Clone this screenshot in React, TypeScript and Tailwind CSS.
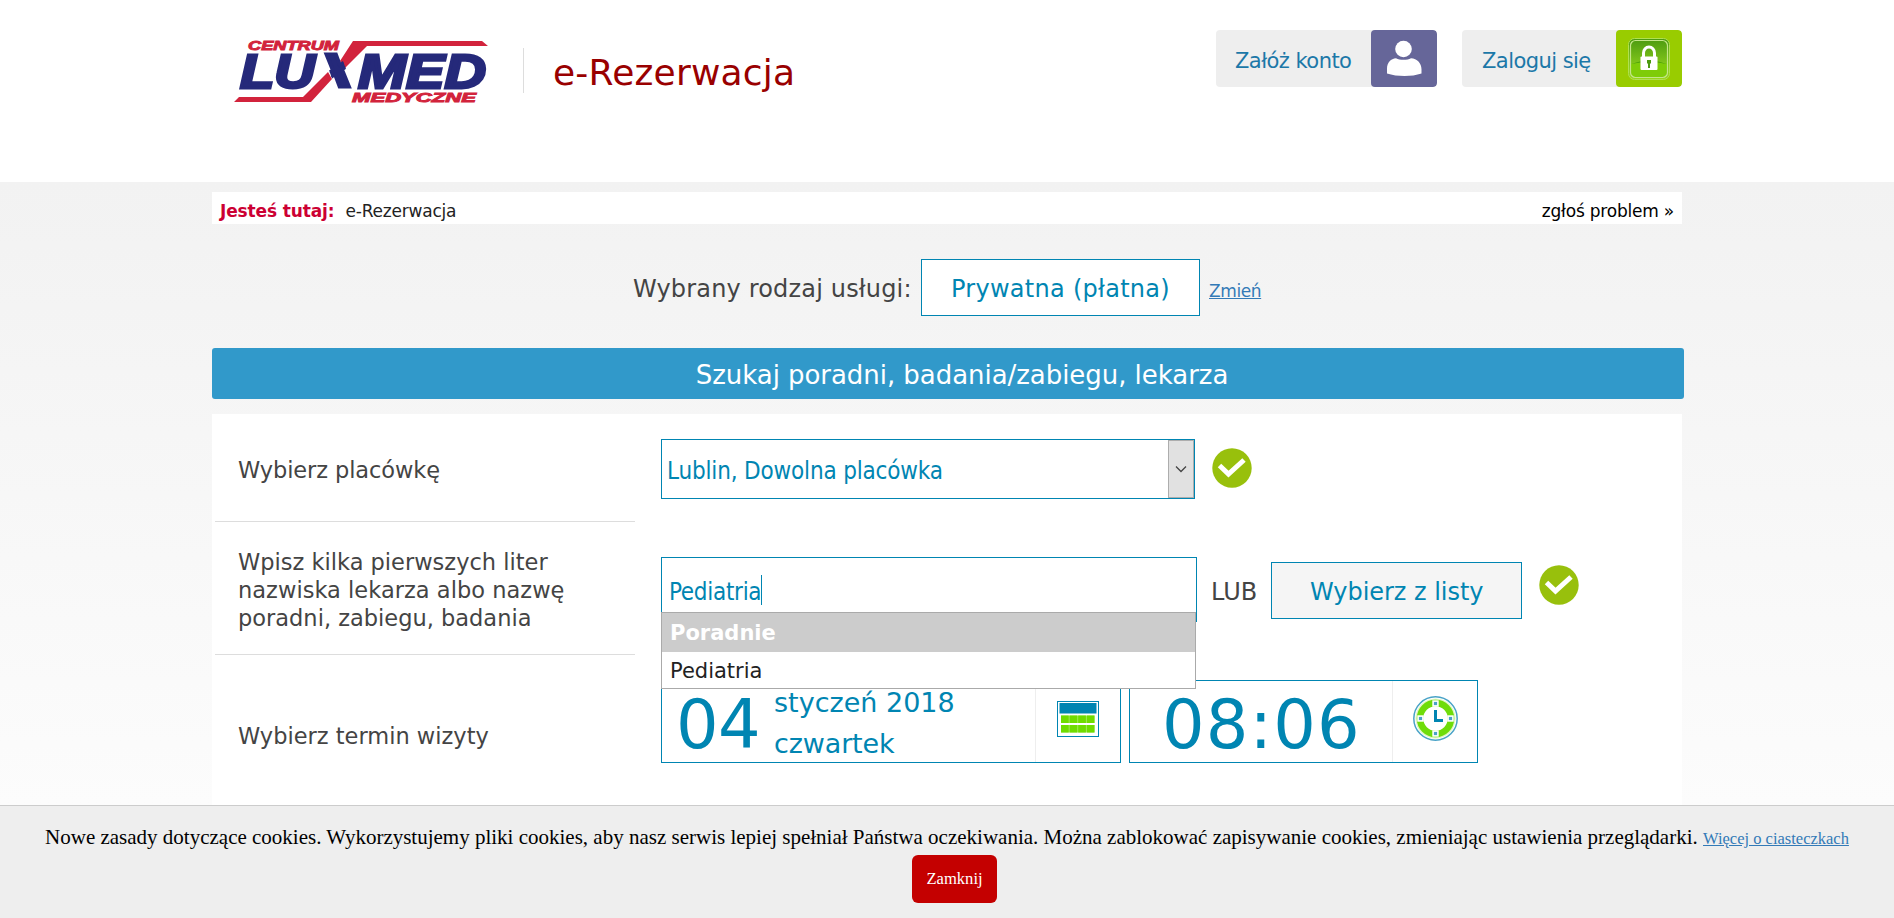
import React from "react";

function Logo() {
  return (
    <svg width="270" height="76" viewBox="0 0 270 76" className="block" aria-label="Centrum Medyczne Luxmed">
      <defs>
        <clipPath id="stroke-x">
          <polygon points="97,19 114,19 130,60 112,60" />
        </clipPath>
      </defs>
      <g fill="#d2233c">
        <polygon points="128,9 257,9 263,14 142,14 120,36 115,29" />
        <polygon points="14,65 78,65 103,40 107,47 86,70 9,70" />
      </g>
      <g fontFamily="Liberation Sans, Arial, sans-serif" fontWeight="700" fontStyle="italic">
        <g fill="#d2233c" stroke="#d2233c" strokeWidth="0.9" fontSize="13">
          <text x="23" y="17.5" textLength="91" lengthAdjust="spacingAndGlyphs">CENTRUM</text>
          <text x="127" y="69.5" textLength="124" lengthAdjust="spacingAndGlyphs">MEDYCZNE</text>
        </g>
        <g fill="#25297a" stroke="#25297a" strokeWidth="2.8" fontSize="48">
          <text x="15" y="55.5" textLength="75" lengthAdjust="spacingAndGlyphs">LU</text>
          <g clipPath="url(#stroke-x)">
            <text x="86" y="55.5" textLength="42" lengthAdjust="spacingAndGlyphs" transform="translate(14.2 0) skewX(-14)">X</text>
          </g>
          <text x="133" y="55.5" textLength="128" lengthAdjust="spacingAndGlyphs">MED</text>
        </g>
      </g>
    </svg>
  );
}

function UserIcon() {
  return (
    <svg width="66" height="57" viewBox="0 0 66 57" fill="#fff">
      <circle cx="32.5" cy="19" r="8.3" />
      <path d="M16 43.5v-5c0-6 4-10 9-10.3 2 1 4.500 1.500 7.500 1.500s5.500-.5 7.500-1.500c6 .3 10.500 5 10.500 11v4.300c-5 1.700-11 2.500-17 2.500s-12.500-.8-17.500-2.500z" />
    </svg>
  );
}

function LockIcon() {
  return (
    <svg width="66" height="57" viewBox="0 0 66 57">
      <defs>
        <linearGradient id="gloss" x1="0" y1="0" x2="0" y2="1">
          <stop offset="0" stopColor="#4a9a10" />
          <stop offset="0.6" stopColor="#80c41a" />
          <stop offset="1" stopColor="#9ad51c" />
        </linearGradient>
      </defs>
      <rect x="12.500" y="8.500" width="41" height="41" rx="6" fill="url(#gloss)" stroke="#b0e050" strokeWidth="1" />
      <path d="M15 34q18-7 36 0v10q0 3-3 3H18q-3 0-3-3z" fill="#7fcc08" />
      <path d="M15 34q18-7 36 0-18-4-36 0z" fill="#469a0c" />
      <rect x="14.500" y="10.500" width="37" height="37" rx="5" fill="none" stroke="#c4e68a" strokeWidth="1.200" />
      <path d="M27.500 28v-5a5.500 6 0 0 1 11 0v5" fill="none" stroke="#fff" strokeWidth="3" />
      <rect x="24.500" y="26.500" width="17" height="13.500" rx="1" fill="#fff" />
      <path d="M31 30h4v3l-1 1v4h-2v-4l-1-1z" fill="#4c9b10" />
    </svg>
  );
}

function CheckIcon() {
  return (
    <svg width="40" height="40" viewBox="0 0 40 40" className="block shrink-0">
      <circle cx="20" cy="20" r="19.700" fill="#98c00c" />
      <path d="M7.500 17.500l9 8.500L32 12" fill="none" stroke="#fff" strokeWidth="5" />
    </svg>
  );
}

function CalendarIcon() {
  const xs = [4, 12.6, 21.2, 29.8];
  return (
    <svg width="42" height="36" viewBox="0 0 42 36" className="block">
      <rect x="0.500" y="0.500" width="41" height="35" fill="#fff" stroke="#0085b2" />
      <rect x="2.500" y="2" width="37" height="10.500" fill="#0085b2" />
      <rect x="4" y="14.500" width="33.500" height="7.500" fill="#a5ea60" />
      <rect x="4" y="24" width="33.500" height="7.500" fill="#a5ea60" />
      {xs.map((x) => (
        <g key={x} fill="#6fdc00">
          <rect x={x} y="14.500" width="7.700" height="7.500" />
          <rect x={x} y="24" width="7.700" height="7.500" />
        </g>
      ))}
    </svg>
  );
}

function ClockIcon() {
  return (
    <svg width="45" height="45" viewBox="0 0 45 45" className="block">
      <circle cx="22.500" cy="22.500" r="21.700" fill="#fff" stroke="#4aa3c7" strokeWidth="1.500" />
      <circle cx="22.500" cy="22.500" r="20" fill="#e0f7c4" />
      <circle cx="22.500" cy="22.500" r="15.5" fill="#fff" stroke="#6fdc0a" strokeWidth="6.5" />
      {[[22.5, 7.5], [22.5, 37.5], [7.5, 22.5], [37.5, 22.5]].map(([x, y]) => (
        <g key={`${x}-${y}`}>
          <rect x={x - 3.2} y={y - 3.2} width="6.400" height="6.400" fill="#fff" />
          <rect x={x - 1.6} y={y - 1.6} width="3.200" height="3.200" fill="#4aa3c7" />
        </g>
      ))}
      <path d="M22.500 14v10.500H30" fill="none" stroke="#0085b2" strokeWidth="3" />
    </svg>
  );
}

export default function App() {
  return (
    <div className="flex h-[918px] w-[1894px] flex-col overflow-hidden bg-white font-['DejaVu_Sans',Verdana,sans-serif] text-[#444]">
      <header className="flex h-[182px] shrink-0 items-start bg-white pl-[225px]">
        <div className="mt-8">
          <Logo />
        </div>
        <div className="mt-12 ml-7 h-[45px] w-px bg-[#ddd]" />
        <h1 className="mt-[53px] ml-[29px] text-[36px] leading-10 tracking-[0.2px] whitespace-nowrap text-[#990000]">e-Rezerwacja</h1>
        <div className="mt-[30px] ml-auto flex gap-[25px] pr-[212px] text-[21px] tracking-[-0.55px] text-[#1c78a8]">
          <button className="flex h-[57px] w-[221px] overflow-hidden rounded bg-[#eee]">
            <span className="flex h-full w-[155px] items-center pt-[6px] pl-[19px] whitespace-nowrap">Załóż konto</span>
            <span className="h-full w-[66px] rounded bg-[#666699]"><UserIcon /></span>
          </button>
          <button className="flex h-[57px] w-[220px] overflow-hidden rounded bg-[#eee]">
            <span className="flex h-full w-[154px] items-center pt-[6px] pl-[20px] whitespace-nowrap">Zaloguj się</span>
            <span className="h-full w-[66px] rounded bg-[#99cc00]"><LockIcon /></span>
          </button>
        </div>
      </header>

      <main className="h-[623px] shrink-0 overflow-hidden bg-gradient-to-b from-[#f2f2f2] to-[#fcfcfc] pt-[10px] pl-[212px]">
        <nav className="flex h-8 w-[1470px] items-center bg-white pt-[8px] pr-2 pl-2 text-[17px]">
          <b className="tracking-[-0.13px] text-[#cc0033]">Jesteś tutaj:</b>
          <span className="ml-[11px] tracking-[-0.2px] text-[#222]">e-Rezerwacja</span>
          <a className="ml-auto tracking-[-0.21px] text-black">zgłoś problem »</a>
        </nav>

        <section className="mt-[35px] flex h-[57px] w-[1470px] items-center pl-[421px] text-[24px]">
          <span className="w-[288px] pt-[2px] tracking-[0.17px] whitespace-nowrap">Wybrany rodzaj usługi:</span>
          <span className="flex h-[57px] w-[279px] items-center border border-[#0085b2] bg-white pt-[2px] pl-[29px] tracking-[0.28px] whitespace-nowrap text-[#0085b2]">Prywatna (płatna)</span>
          <a className="ml-[9px] pt-[8px] text-[17px] tracking-[-0.4px] text-[#337ab7] underline">Zmień</a>
        </section>

        <h2 className="mt-8 flex h-[51px] w-[1472px] items-center justify-center rounded-[3px] bg-[#3199ca] pt-[3px] text-[26px] text-white">
          <span className="ml-[28px] tracking-[-0.05px]">Szukaj poradni, badania/zabiegu, lekarza</span>
        </h2>

        <form className="mt-[15px] h-[391px] w-[1470px] bg-white pl-[3px] text-[22.5px]">
          <div className="flex h-[108px]">
            <label className="flex w-[420px] items-center border-b border-[#ddd] pt-[7px] pl-[23px] tracking-[-0.1px]">Wybierz placówkę</label>
            <div className="mt-[25px] ml-[26px] flex h-[60px] w-[534px] border border-[#0085b2] bg-white">
              <span className="flex flex-1 items-center pt-[3px] pl-[5px] font-['DejaVu_Sans_Condensed','DejaVu_Sans',sans-serif] text-[24px] font-stretch-condensed tracking-[-0.17px] text-[#0085b2]">Lublin, Dowolna placówka</span>
              <span className="flex w-[26px] items-center justify-center border border-[#adadad] bg-[#e1e1e1]">
                <svg width="12" height="8" viewBox="0 0 12 8"><path d="M1 1.500l5 5 5-5" fill="none" stroke="#444" strokeWidth="1.300" /></svg>
              </span>
            </div>
            <div className="mt-[34px] ml-[17px]"><CheckIcon /></div>
          </div>

          <div className="flex h-[133px]">
            <label className="flex w-[420px] flex-col justify-center border-b border-[#ddd] pt-[4px] pl-[23px] leading-7 whitespace-nowrap">
              <span>Wpisz kilka pierwszych liter</span>
              <span className="tracking-[0.03px]">nazwiska lekarza albo nazwę</span>
              <span>poradni, zabiegu, badania</span>
            </label>
            <div className="relative mt-[35px] ml-[26px] flex h-[65px] w-[536px] items-center border border-[#0085b2] bg-white">
              <span className="pt-[4px] pl-[7px] font-['DejaVu_Sans_Condensed','DejaVu_Sans',sans-serif] text-[24px] font-stretch-condensed tracking-[-0.3px] text-[#0085b2]">Pediatria</span>
              <span className="h-[30px] w-px bg-[#0085b2]" />
              <ul className="absolute top-[54px] -left-px z-10 w-[535px] border border-[#aaa] bg-white text-[21px]">
                <li className="flex h-[39px] items-center bg-[#ccc] pt-[3px] pl-[8px] font-bold text-white">Poradnie</li>
                <li className="flex h-[36px] items-center pt-[4px] pl-[8px] text-[#222]">Pediatria</li>
              </ul>
            </div>
            <span className="mt-[55px] ml-[14px] w-[60px] text-[24px] leading-[30px]">LUB</span>
            <button type="button" className="mt-[40px] flex h-[57px] w-[251px] items-center border border-[#0085b2] bg-[#f5f5f5] pt-[3px] pl-[38px] text-[24px] tracking-[-0.03px] whitespace-nowrap text-[#0085b2]">Wybierz z listy</button>
            <div className="mt-[43px] ml-[17px]"><CheckIcon /></div>
          </div>

          <div className="flex h-[148px]">
            <label className="flex w-[420px] items-center pt-[16px] pl-[23px]">Wybierz termin wizyty</label>
            <div className="mt-[25px] ml-[26px] flex h-[83px] w-[460px] border border-[#0085b2] text-[#0085b2]">
              <span className="flex w-[112px] items-center pt-[7px] pl-[14px] text-[67px] leading-none tracking-[-0.6px]">04</span>
              <span className="flex h-[82px] flex-1 flex-col pt-px text-[27px] leading-[41px]">
                <span>styczeń 2018</span>
                <span className="tracking-[-0.13px]">czwartek</span>
              </span>
              <span className="w-[85px] border-l border-[#eee] pt-[20px] pl-[21px]"><CalendarIcon /></span>
            </div>
            <div className="mt-[25px] ml-[8px] flex h-[83px] w-[349px] border border-[#0085b2] text-[#0085b2]">
              <span className="flex flex-1 items-center pt-[7px] pl-[32px] text-[67px] leading-none tracking-[1.14px]">08:06</span>
              <span className="w-[85px] border-l border-[#eee] pt-[15px] pl-[20px]"><ClockIcon /></span>
            </div>
          </div>
        </form>
      </main>

      <footer className="flex h-[113px] shrink-0 flex-col items-center border-t border-[#ccc] bg-[#eee] pt-[15px] font-['Liberation_Serif','Times_New_Roman',serif] text-[21px] leading-8 text-black">
        <p className="whitespace-nowrap">
          Nowe zasady dotyczące cookies. Wykorzystujemy pliki cookies, aby nasz serwis lepiej spełniał Państwa oczekiwania. Można zablokować zapisywanie cookies, zmieniając ustawienia przeglądarki.{" "}
          <a className="text-[16.5px] text-[#337ab7] underline">Więcej o ciasteczkach</a>
        </p>
        <button className="ml-[15px] flex h-12 w-[85px] items-center justify-center rounded-md bg-[#c40000] text-[16.6px] text-white">Zamknij</button>
      </footer>
    </div>
  );
}
